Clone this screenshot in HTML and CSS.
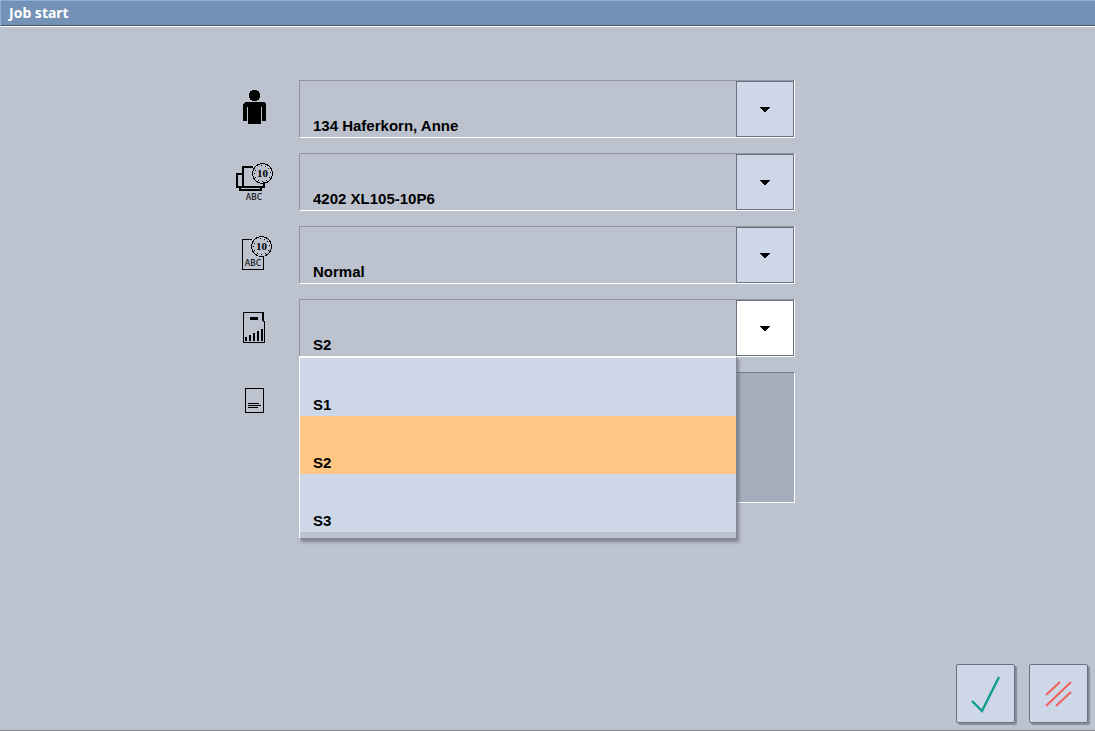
FILE: index.html
```
<!DOCTYPE html>
<html lang="en">
<head>
<meta charset="utf-8">
<title>Job start</title>
<link rel="stylesheet" href="styles.css">
</head>
<body>
<form class="dialog">
  <header class="titlebar"><h1 class="title">Job start</h1></header>
  <main class="fields">
    <div class="row">
      <label class="row-label" for="operator" aria-label="Operator">
        <svg class="icon" viewBox="0 0 50 50"><circle cx="24.500" cy="15.500" r="5.700"/><path d="M15 22H34L36 24V41H32V27H31V44H18V27H17V41H13V24Z"/></svg>
      </label>
      <div class="combo">
        <select class="select" id="operator"><option>134 Haferkorn, Anne</option></select>
        <span class="arrow"><svg class="caret" viewBox="0 0 10 5"><path d="M0 0H10V1H9V2H8V3H7V4H6V5H4V4H3V3H2V2H1V1H0Z"/></svg></span>
      </div>
    </div>
    <div class="row">
      <label class="row-label" for="machine" aria-label="Machine">
        <svg class="icon" viewBox="0 -2 50 50">
          <path class="heavy" d="M13 32V12H23M7 32V19H13M6 32H34V27M10 33V35H31V33"/>
          <circle class="line" cx="32.500" cy="18.500" r="10"/><circle class="dots" cx="32.500" cy="18.500" r="8"/>
          <text class="coin-text" x="32.500" y="22">10</text><text class="abc" x="24" y="45">ABC</text>
        </svg>
      </label>
      <div class="combo">
        <select class="select" id="machine"><option>4202 XL105-10P6</option></select>
        <span class="arrow"><svg class="caret" viewBox="0 0 10 5"><path d="M0 0H10V1H9V2H8V3H7V4H6V5H4V4H3V3H2V2H1V1H0Z"/></svg></span>
      </div>
    </div>
    <div class="row">
      <label class="row-label" for="mode" aria-label="Mode">
        <svg class="icon" viewBox="0 -2 50 50">
          <path class="line" d="M22 11.500H12.500V41.500H33.500V29"/>
          <circle class="line" cx="31.500" cy="18.500" r="10"/><circle class="dots" cx="31.500" cy="18.500" r="8"/>
          <text class="coin-text" x="31.500" y="22">10</text><text class="abc" x="23" y="38">ABC</text>
        </svg>
      </label>
      <div class="combo">
        <select class="select" id="mode"><option>Normal</option></select>
        <span class="arrow"><svg class="caret" viewBox="0 0 10 5"><path d="M0 0H10V1H9V2H8V3H7V4H6V5H4V4H3V3H2V2H1V1H0Z"/></svg></span>
      </div>
    </div>
    <div class="row">
      <label class="row-label" for="level" aria-label="Level">
        <svg class="icon" viewBox="0 -1 50 50">
          <path class="line" d="M33 12.500H13.500V42.500H34.500V21.500H33"/>
          <path d="M32 12H34V21H32ZM20 17H28V20H20ZM15 37H17V41H15ZM19 35H21V41H19ZM23 33H25V41H23ZM27 31H29V41H27ZM31 29H33V41H31Z"/>
        </svg>
      </label>
      <div class="combo">
        <select class="select" id="level"><option>S1</option><option selected>S2</option><option>S3</option></select>
        <span class="arrow arrow-open"><svg class="caret" viewBox="0 0 10 5"><path d="M0 0H10V1H9V2H8V3H7V4H6V5H4V4H3V3H2V2H1V1H0Z"/></svg></span>
        <div class="menu" role="listbox" aria-label="Level">
          <button class="option" type="button" role="option">S1</button>
          <button class="option option-current" type="button" role="option" aria-selected="true">S2</button>
          <button class="option" type="button" role="option">S3</button>
        </div>
      </div>
    </div>
    <div class="row">
      <label class="row-label" for="note" aria-label="Note">
        <svg class="icon" viewBox="0 0 50 50"><path class="line" d="M15.500 16.500H33.500V40.500H15.500ZM18 31.500H29M18 33.500H31M18 35.500H28"/></svg>
      </label>
      <textarea class="note" id="note" readonly></textarea>
    </div>
  </main>
  <footer class="actions">
    <button class="action" type="submit" aria-label="OK"><svg class="action-icon" viewBox="0 0 57 57"><path class="check" d="M15 36L25 46L42 12"/></svg></button>
    <button class="action" type="reset" aria-label="Cancel"><svg class="action-icon" viewBox="0 0 57 57"><path class="cancel" d="M16 30L30 17M16 41L41 17M26 41L41 27"/></svg></button>
  </footer>
</form>
</body>
</html>
```
FILE: styles.css
```
* { box-sizing: border-box; }

body {
  margin: 0;
  background: #bcc2ce;
  color: #000;
  font-family: "Liberation Sans", Arial, sans-serif;
}

.dialog {
  display: flex;
  flex-direction: column;
  min-height: 100vh;
  border-bottom: 1px solid #8c8490;
}

.titlebar {
  height: 27px;
  padding: 0 8px;
  background: #7492b6;
  border-top: 1px solid #8fb0dc;
  border-left: 1px solid #8fb0dc;
  border-bottom: 1px solid #fff;
  box-shadow: inset 0 -1px #40566c;
}

.title {
  margin: 0;
  color: #fff;
  font: bold 14px/24px "Noto Sans", sans-serif;
}

.fields {
  display: flex;
  flex: 1;
  flex-direction: column;
  gap: 15px;
  padding: 53px 1px 0 0;
}

.row {
  display: grid;
  grid-template-columns: 1fr 496px 1fr;
}

.row-label {
  justify-self: end;
  padding-right: 19px;
}

.icon {
  display: block;
  width: 50px;
  height: 50px;
  shape-rendering: crispEdges;
}

.line, .heavy, .dots { fill: none; stroke: #000; }
.heavy { stroke-width: 2; }
.dots { stroke-dasharray: 1 3; }

.coin-text {
  font: bold 11px "Liberation Serif", serif;
  text-anchor: middle;
}

.abc {
  font: 9px "DejaVu Sans Mono", monospace;
  text-anchor: middle;
}

.combo { position: relative; }

.select {
  appearance: none;
  display: block;
  width: 100%;
  height: 58px;
  margin: 0;
  padding: 33px 70px 0 13px;
  background: none;
  border: 1px solid #9195a0;
  border-right-color: #fff;
  border-bottom-color: #fff;
  border-radius: 0;
  color: #000;
  font: bold 15px/22px "Liberation Sans", Arial, sans-serif;
}

.arrow {
  position: absolute;
  top: 1px;
  right: 1px;
  bottom: 1px;
  display: grid;
  place-items: center;
  width: 58px;
  background: #ced7e8;
  border: 1px solid #6b717e;
  pointer-events: none;
}

.arrow-open { background: #fff; }

.caret {
  width: 10px;
  height: 5px;
  shape-rendering: crispEdges;
}

.menu {
  position: absolute;
  z-index: 1;
  top: 57px;
  left: 0;
  right: 58px;
  padding-bottom: 6px;
  background: #bcc2ce;
  border: 1px solid #fff;
  border-top-width: 2px;
  border-right-color: #85878c;
  border-bottom-color: #85878c;
  box-shadow: 2px 3px 3px rgba(70, 76, 90, 0.5);
}

.option {
  display: block;
  width: 100%;
  height: 58px;
  padding: 36px 13px 0;
  background: #ced7e8;
  border: 0;
  color: #000;
  font: bold 15px/22px "Liberation Sans", Arial, sans-serif;
  text-align: left;
}

.option-current { background: #ffc684; }

.note {
  display: block;
  width: 100%;
  height: 131px;
  padding: 12px;
  background: #a4adbc;
  border: 1px solid #777d86;
  border-right-color: #fff;
  border-bottom-color: #fff;
  border-radius: 0;
  font: bold 15px/22px "Liberation Sans", Arial, sans-serif;
  resize: none;
}

.actions {
  display: flex;
  justify-content: flex-end;
  gap: 14px;
  padding: 0 7px 7px 0;
}

.action {
  width: 59px;
  height: 59px;
  padding: 0;
  background: #ced7e8;
  border: 1px solid #6b717e;
  border-radius: 2px;
  box-shadow: 2px 2px 1px #858c9a;
}

.action-icon {
  display: block;
  width: 57px;
  height: 57px;
}

.check, .cancel { fill: none; }
.check { stroke: #0f9d90; stroke-width: 2.4; }
.cancel { stroke: #f0605a; stroke-width: 2; }
```
